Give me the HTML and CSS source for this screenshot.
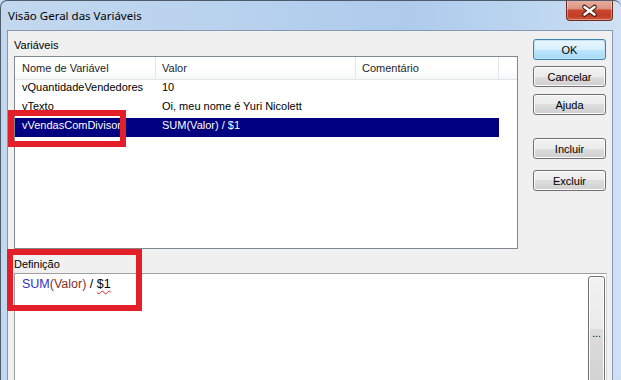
FILE: index.html
```html
<!DOCTYPE html>
<html lang="pt">
<head>
<meta charset="utf-8">
<title>Visão Geral das Variáveis</title>
<link rel="stylesheet" href="styles.css">
</head>
<body>
<div class="window">
  <div class="titlebar">
    <span class="title">Visão Geral das Variáveis</span>
    <div class="close">
      <svg width="45" height="19" viewBox="0 0 45 19">
        <path d="M17.5 7 L27.5 14.5 M27.5 7 L17.5 14.5" stroke="#3b1610" stroke-width="4.6" stroke-linecap="round" fill="none"/>
        <path d="M17.5 7 L27.5 14.5 M27.5 7 L17.5 14.5" stroke="#ffffff" stroke-width="2.6" stroke-linecap="round" fill="none"/>
      </svg>
    </div>
  </div>
  <div class="client">
    <div class="top">
      <div class="vars">
        <div class="label">Variáveis</div>
        <div class="list">
          <div class="header">
            <div class="hcell c1">Nome de Variável</div>
            <div class="hcell c2">Valor</div>
            <div class="hcell c3">Comentário</div>
          </div>
          <div class="row">
            <div class="cell c1">vQuantidadeVendedores</div>
            <div class="cell c2">10</div>
            <div class="cell c3"></div>
          </div>
          <div class="row">
            <div class="cell c1">vTexto</div>
            <div class="cell c2">Oi, meu nome é Yuri Nicolett</div>
            <div class="cell c3"></div>
          </div>
          <div class="row selected">
            <div class="cell c1">vVendasComDivisor</div>
            <div class="cell c2">SUM(Valor) / $1</div>
            <div class="cell c3"></div>
          </div>
        </div>
      </div>
      <div class="buttons">
        <div class="btn default">OK</div>
        <div class="btn b-cancel">Cancelar</div>
        <div class="btn b-help">Ajuda</div>
        <div class="btn b-add">Incluir</div>
        <div class="btn b-del">Excluir</div>
      </div>
    </div>
    <div class="def">
      <div class="label">Definição</div>
      <div class="editor">
        <div class="code"><span class="fn">SUM</span><span class="fld">(Valor)</span> / <span class="err">$1</span></div>
        <div class="more">...</div>
      </div>
    </div>
  </div>
  <div class="mark mark1"></div>
  <div class="mark mark2"></div>
</div>
</body>
</html>
```

FILE: styles.css
```css
* { box-sizing: border-box; }

body {
  margin: 0;
  width: 621px;
  height: 380px;
  overflow: hidden;
  font-family: "Liberation Sans", Arial, sans-serif;
  font-size: 11px;
  color: #000;
  background: #c9dcf1;
}

.window {
  position: relative;
  width: 621px;
  height: 380px;
  overflow: hidden;
  display: flex;
  flex-direction: column;
  padding: 0 8px 0 6px;
  border-top: 1px solid #4d5b6b;
  border-left: 1px solid #4d5b6b;
  border-radius: 7px 7px 0 0;
  background: linear-gradient(90deg, #c2d8ef 0%, #b9d2ee 35%, #aecbec 65%, #bcd5f0 85%, #cfe0f3 100%);
}

.titlebar {
  height: 29px;
  flex: none;
  display: flex;
  justify-content: space-between;
  align-items: flex-start;
}

.title {
  padding: 7px 0 0 1px;
  font-family: "Noto Sans", sans-serif;
  font-size: 11.5px;
  line-height: 16px;
  color: #000;
}

.close {
  width: 47px;
  height: 21px;
  margin-top: -1px;
  border: 1px solid #6e2b21;
  border-top: none;
  border-radius: 0 0 4px 4px;
  background: linear-gradient(#e8b0a2 0%, #dc9684 42%, #c8462f 52%, #c33d27 80%, #d25a3e 100%);
  box-shadow: inset 0 0 0 1px rgba(255,255,255,0.35);
  display: flex;
  align-items: flex-start;
  justify-content: center;
}

.close svg { display: block; }

.client {
  flex: 1;
  min-height: 0;
  display: flex;
  flex-direction: column;
  padding: 0 6px;
  background: #f0f0f0;
  border: 1px solid #8799b0;
  border-bottom: none;
}

.top {
  display: flex;
  gap: 15px;
  flex: none;
}

.vars { width: 504px; }

.label {
  line-height: 14px;
  margin-top: 7px;
  color: #000;
}

.list {
  margin-top: 4px;
  height: 193px;
  border: 1px solid #828790;
  background: #fff;
}

.header {
  display: flex;
  height: 23px;
  border-bottom: 1px solid #e3e5e8;
  background: linear-gradient(#ffffff 0%, #ffffff 55%, #f6f7f9 100%);
}

.hcell {
  line-height: 22px;
  border-right: 1px solid #e3e5e8;
  color: #1e1e1e;
}

.c1 { width: 141px; padding-left: 7px; }
.c2 { width: 200px; padding-left: 6px; }
.c3 { width: 143px; padding-left: 6px; }

.row {
  display: flex;
  width: 484px;
  height: 19px;
  line-height: 15px;
  white-space: nowrap;
}

.cell { overflow: hidden; }

.row.selected {
  background: #000080;
  color: #fff;
}

.buttons {
  width: 73px;
  display: flex;
  flex-direction: column;
  padding-top: 8px;
}

.btn {
  height: 21px;
  display: flex;
  align-items: center;
  justify-content: center;
  border: 1px solid #707070;
  border-radius: 3px;
  background: linear-gradient(#f2f2f2 0%, #ebebeb 50%, #dddddd 50%, #cfcfcf 100%);
  box-shadow: inset 0 0 0 1px #fbfbfb;
  color: #000;
}

.btn.default {
  border-color: #3c7fb1;
  background: linear-gradient(#eaf6fd 0%, #d9f0fc 50%, #bee6fd 50%, #a7d9f5 100%);
  box-shadow: inset 0 0 0 1px #bfe4f8;
}

.b-cancel { margin-top: 6px; }
.b-help { margin-top: 7px; }
.b-add { margin-top: 23px; }
.b-del { margin-top: 11px; }

.def {
  flex: 1;
  min-height: 0;
  display: flex;
  flex-direction: column;
  margin-right: -1px;
}

.def .label { margin-top: 8px; }

.editor {
  flex: 1;
  min-height: 0;
  overflow: hidden;
  margin-top: 2px;
  display: flex;
  align-items: flex-start;
  background: #fff;
  border-top: 1px solid #a0a0a0;
  border-left: 1px solid #a0a0a0;
  border-right: 1px solid #d6d6d6;
}

.code {
  flex: 1;
  padding: 2px 0 0 7px;
  font-size: 12.5px;
  line-height: 16px;
  white-space: nowrap;
}

.fn { color: #3030c8; }
.fld { color: #84302c; }
.err {
  text-decoration: underline wavy #e02020;
  text-decoration-thickness: 1px;
  text-underline-offset: 2px;
}

.more {
  flex: none;
  width: 17px;
  height: 120px;
  margin: 2px 1px 0 0;
  border: 1px solid #707070;
  border-radius: 3px;
  background: linear-gradient(#f2f2f2 0%, #ebebeb 44%, #dddddd 44%, #cfcfcf 100%);
  box-shadow: inset 0 0 0 1px #fbfbfb;
  display: flex;
  align-items: center;
  justify-content: center;
  font-size: 10px;
  line-height: 10px;
  padding-bottom: 4px;
}

.mark {
  position: absolute;
  border: 6px solid #e3202a;
}

.mark1 { left: 7px; top: 109px; width: 118px; height: 37px; }
.mark2 { left: 6px; top: 248px; width: 135px; height: 62px; }
```
